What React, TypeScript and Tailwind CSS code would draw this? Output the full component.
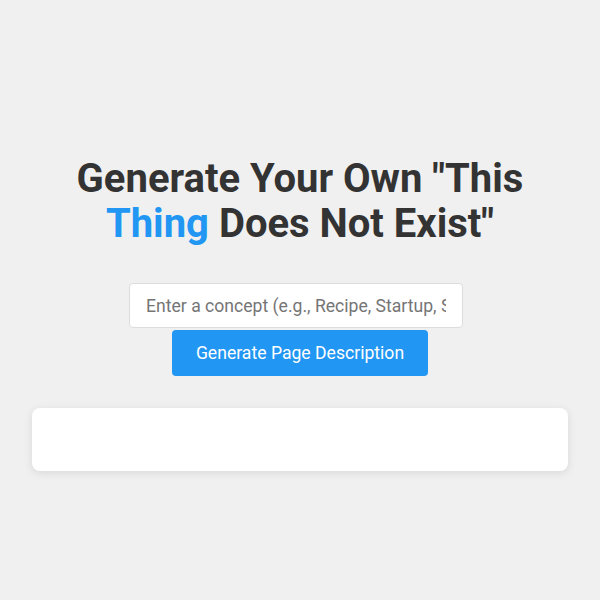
export default function App() {
  return (
    <div className="min-h-[600px] w-full bg-[#f0f0f0] pt-[156px] px-[32px]" style={{ fontFamily: 'Roboto, "Noto Sans", sans-serif' }}>
      <div className="flex flex-col items-center">
        <h1 className="text-center text-[40px] leading-[45px] font-bold text-[#333333] w-[480px]">
          Generate Your Own "This <span className="text-[#2196f3]">Thing</span> Does Not Exist"
        </h1>
        <input
          type="text"
          placeholder="Enter a concept (e.g., Recipe, Startup, Superhero)"
          className="mt-[37px] mr-[8px] w-[334px] h-[45px] px-[16px] text-[17.6px] bg-white border border-[#dddddd] rounded-[4px] text-[#333] placeholder:text-[#757575] outline-none"
        />
        <button className="mt-[2px] w-[256px] h-[46px] bg-[#2196f3] text-white text-[17.6px] rounded-[4px]">
          Generate Page Description
        </button>
      </div>
      <div className="mt-[32px] h-[63px] bg-white rounded-[8px] shadow-[0_2px_8px_rgba(0,0,0,0.1)]"></div>
    </div>
  );
}
